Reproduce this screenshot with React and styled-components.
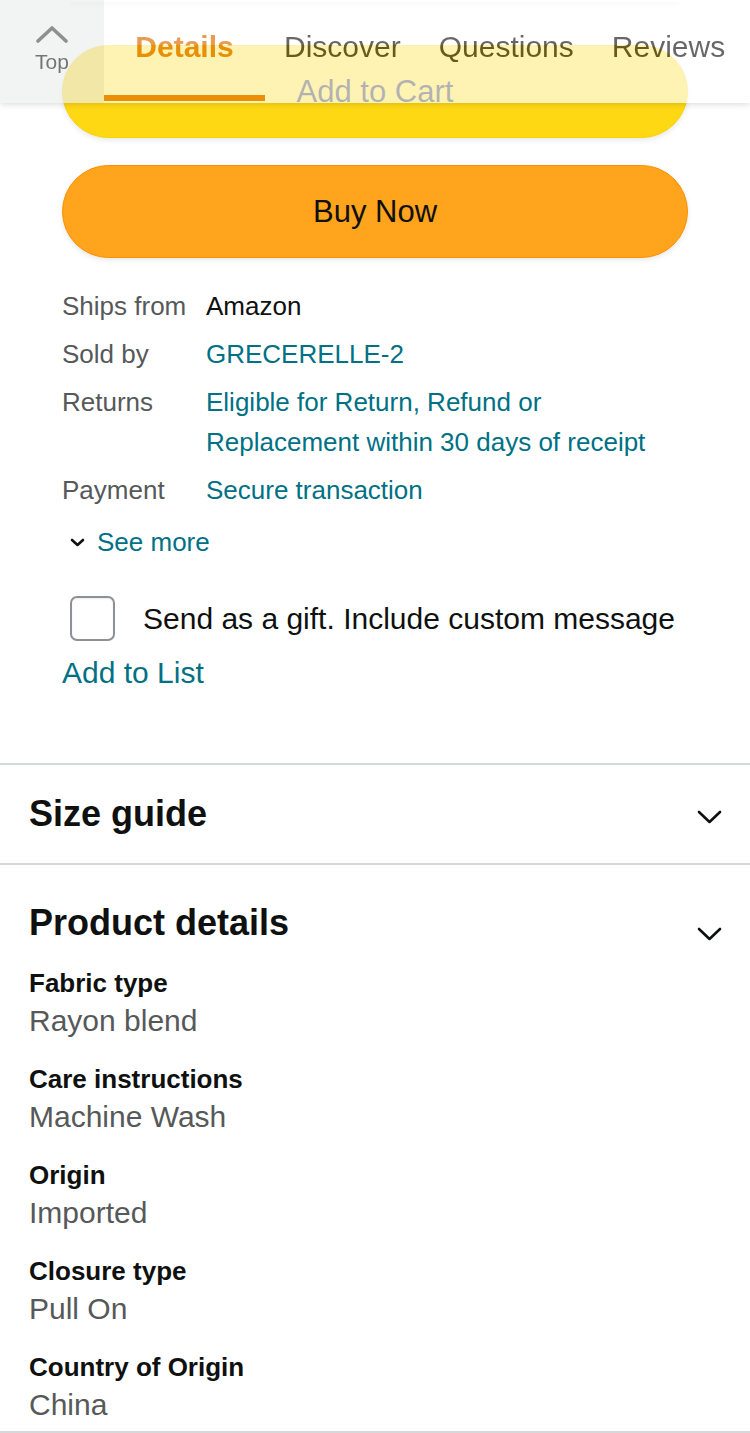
import React from 'react';
import styled, { createGlobalStyle } from 'styled-components';

const GlobalStyle = createGlobalStyle`
  html, body {
    margin: 0;
    padding: 0;
    background: #ffffff;
  }
  body {
    font-family: "Liberation Sans", Arial, Helvetica, sans-serif;
    color: #0f1111;
    -webkit-font-smoothing: antialiased;
  }
`;

const Page = styled.div`
  width: 750px;
  height: 1433px;
  overflow: hidden;
  background: #ffffff;
`;

/* sticky translucent tab bar */
const NavBar = styled.nav`
  position: fixed;
  top: 0;
  left: 0;
  width: 750px;
  height: 103px;
  display: flex;
  background: #ffffff;
  opacity: 0.68;
  box-shadow: 0 2px 6px rgba(0, 0, 0, 0.18);
  z-index: 10;
`;

const TopButton = styled.button`
  width: 104px;
  height: 103px;
  border: 0;
  margin: 0;
  padding: 26px 0 0;
  background: #eceeee;
  display: flex;
  flex-direction: column;
  align-items: center;
  gap: 7px;
  font-family: inherit;
  font-size: 21px;
  line-height: 24px;
  color: #333;
`;

const Tabs = styled.div`
  display: flex;
  height: 103px;
`;

const Tab = styled.div`
  box-sizing: border-box;
  height: 101px;
  min-width: ${p => (p.$active ? '161px' : '0')};
  padding: 30px 19px 0;
  text-align: center;
  font-size: 30px;
  line-height: 34px;
  font-weight: ${p => (p.$active ? 700 : 400)};
  color: ${p => (p.$active ? '#dc6d00' : '#1f1f1f')};
  border-bottom: 6px solid ${p => (p.$active ? '#e06c00' : 'transparent')};
  white-space: nowrap;
`;

const Buybox = styled.section`
  padding: 0 62px;
`;

const SelectEdge = styled.div`
  height: 2px;
  margin: 0 8px;
  background: #ffffff;
  border-radius: 0 0 8px 8px;
  box-shadow: 0 2px 4px rgba(0, 0, 0, 0.16);
`;

const PillButton = styled.button`
  display: block;
  box-sizing: border-box;
  width: 100%;
  height: 93px;
  margin-top: ${p => p.$top}px;
  border-radius: 47px;
  border: 1px solid ${p => p.$edge};
  background: ${p => p.$fill};
  box-shadow: 0 2px 5px rgba(213, 217, 217, 0.6);
  font-family: inherit;
  font-size: 31px;
  color: #0f1111;
  cursor: pointer;
`;

const InfoTable = styled.div`
  margin-top: 24px;
  padding-right: 8px;
  display: grid;
  grid-template-columns: 144px 1fr;
  font-size: 26px;
  line-height: 40px;
`;

const Label = styled.div`
  padding: 4px 0;
  color: #565959;
`;

const Value = styled.div`
  padding: 4px 0;
  color: ${p => (p.$link ? '#007185' : '#0f1111')};
`;

const SeeMore = styled.div`
  margin-top: 8px;
  padding-left: 8px;
  display: flex;
  align-items: center;
  gap: 12px;
  font-size: 26px;
  line-height: 40px;
  color: #007185;
`;

const GiftRow = styled.label`
  margin-top: 34px;
  padding-left: 8px;
  display: flex;
  align-items: center;
  gap: 28px;
  font-size: 30px;
  line-height: 44px;
  color: #0f1111;
`;

const Checkbox = styled.span`
  box-sizing: border-box;
  width: 45px;
  height: 45px;
  border: 2px solid #8d9096;
  border-radius: 7px;
  background: #ffffff;
  box-shadow: inset 0 1px 2px rgba(0, 0, 0, 0.08);
`;

const ListLink = styled.div`
  margin-top: 12px;
  font-size: 30px;
  line-height: 40px;
  color: #007185;
`;

const Accordion = styled.section`
  border-top: 2px solid #d5d9d9;
  margin-top: ${p => p.$top || 0}px;
  padding: ${p => p.$pad};
`;

const AccordionHead = styled.div`
  display: flex;
  justify-content: space-between;
  align-items: ${p => (p.$alignTop ? 'flex-start' : 'center')};
  padding: 0 28px 0 29px;
`;

const Heading = styled.h2`
  margin: 0;
  font-size: 36px;
  line-height: 44px;
  font-weight: 700;
  color: #0f1111;
`;

const ChevronBox = styled.span`
  display: flex;
  margin-top: ${p => p.$offset || 0}px;
`;

const DetailList = styled.dl`
  margin: 0;
  padding: 0 29px;
`;

const DetailItem = styled.div`
  margin-top: 20px;
`;

const DetailKey = styled.dt`
  font-size: 26px;
  line-height: 36px;
  font-weight: 700;
  color: #0f1111;
`;

const DetailVal = styled.dd`
  margin: 0;
  font-size: 30px;
  line-height: 40px;
  color: #565959;
`;

function Chevron({ width = 25, height = 14, stroke = '#0f1111', sw = 2.6, up = false }) {
  const d = up
    ? `M2 ${height - 2} L${width / 2} 2 L${width - 2} ${height - 2}`
    : `M2 2 L${width / 2} ${height - 2} L${width - 2} 2`;
  return (
    <svg width={width} height={height} viewBox={`0 0 ${width} ${height}`} fill="none">
      <path d={d} stroke={stroke} strokeWidth={sw} strokeLinecap="round" strokeLinejoin="round" />
    </svg>
  );
}

const details = [
  ['Fabric type', 'Rayon blend'],
  ['Care instructions', 'Machine Wash'],
  ['Origin', 'Imported'],
  ['Closure type', 'Pull On'],
  ['Country of Origin', 'China'],
];

export default function App() {
  return (
    <Page>
      <GlobalStyle />
      <NavBar>
        <TopButton>
          <Chevron width={32} height={17} stroke="#5a5a5a" sw={3.6} up />
          Top
        </TopButton>
        <Tabs>
          <Tab $active>Details</Tab>
          <Tab>Discover</Tab>
          <Tab>Questions</Tab>
          <Tab>Reviews</Tab>
        </Tabs>
      </NavBar>

      <Buybox>
        <SelectEdge />
        <PillButton $top={43} $fill="#ffd814" $edge="#fcd200">Add to Cart</PillButton>
        <PillButton $top={27} $fill="#ffa41c" $edge="#ff8f00">Buy Now</PillButton>

        <InfoTable>
          <Label>Ships from</Label>
          <Value>Amazon</Value>
          <Label>Sold by</Label>
          <Value $link>GRECERELLE-2</Value>
          <Label>Returns</Label>
          <Value $link>Eligible for Return, Refund or Replacement within 30 days of receipt</Value>
          <Label>Payment</Label>
          <Value $link>Secure transaction</Value>
        </InfoTable>

        <SeeMore>
          <Chevron width={15} height={9} sw={2.6} />
          See more
        </SeeMore>

        <GiftRow>
          <Checkbox />
          Send as a gift. Include custom message
        </GiftRow>

        <ListLink>Add to List</ListLink>
      </Buybox>

      <Accordion $top={70} $pad="27px 0">
        <AccordionHead>
          <Heading>Size guide</Heading>
          <ChevronBox $offset={6}>
            <Chevron />
          </ChevronBox>
        </AccordionHead>
      </Accordion>

      <Accordion $pad="36px 0 6px">
        <AccordionHead $alignTop>
          <Heading>Product details</Heading>
          <ChevronBox $offset={26}>
            <Chevron />
          </ChevronBox>
        </AccordionHead>
        <DetailList>
          {details.map(([k, v]) => (
            <DetailItem key={k}>
              <DetailKey>{k}</DetailKey>
              <DetailVal>{v}</DetailVal>
            </DetailItem>
          ))}
        </DetailList>
      </Accordion>
      <Accordion />
    </Page>
  );
}
